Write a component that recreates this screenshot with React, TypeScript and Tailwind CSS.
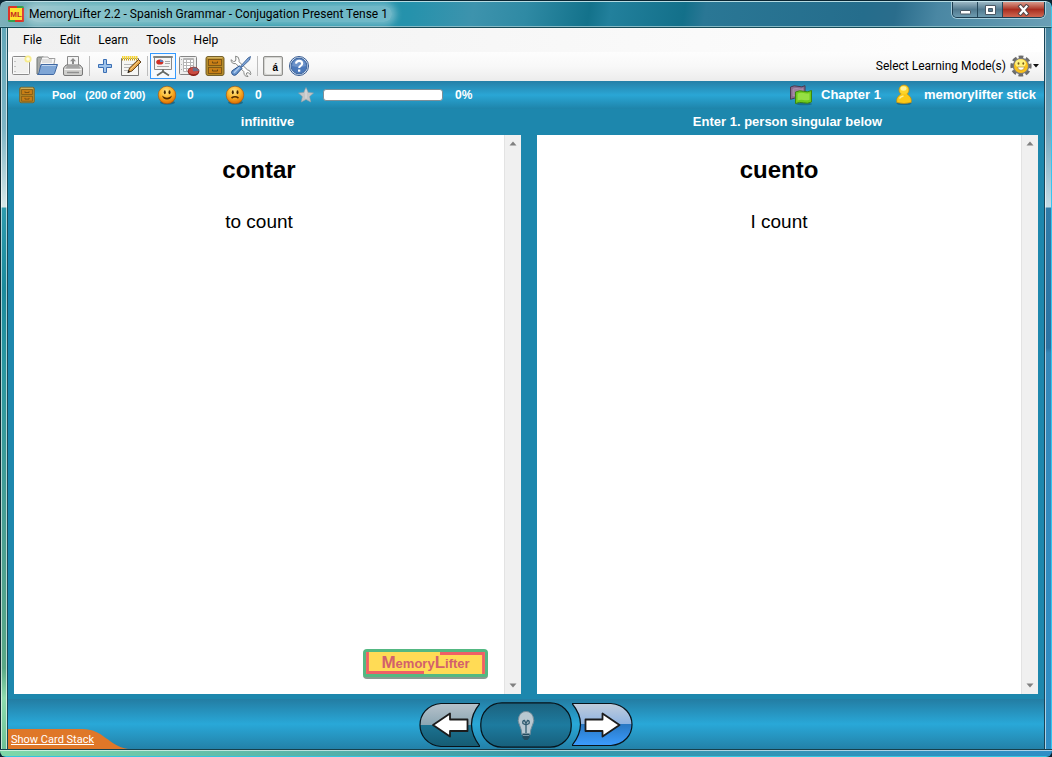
import React from "react";

type IconProps = { className?: string };

const NewIcon = () => (
  <svg width="22" height="22" viewBox="0 0 22 22">
    <rect x="2.500" y="1.500" width="17" height="18" rx="1" fill="#fafafa" stroke="#8b8b8b" />
    <rect x="4" y="3" width="14" height="15" fill="#f0f0ef" />
    <path d="M5 6v1M5 11v1M5 16v1" stroke="#999" />
    <circle cx="18" cy="4" r="3.600" fill="#f7ec8c" />
    <circle cx="18" cy="4" r="1.800" fill="#fffde8" />
  </svg>
);

const OpenIcon = () => (
  <svg width="24" height="22" viewBox="0 0 24 22">
    <path d="M2 19V3.500q0-1.500 1.500-1.500h5l1.500 2h8v13z" fill="#a9acab" stroke="#6f7472" />
    <path d="M5 8l2-6h6l1 1.500h6L18 14H5z" fill="#f7f7f7" stroke="#8d8d8d" strokeWidth=".8" />
    <path d="M7 5h10M7 7h10" stroke="#bbb" strokeWidth=".8" />
    <path d="M6 9.500h16.500L19.500 18.500q-.3 1-1.300 1H2.500q1.200-.3 1.500-2z" fill="#7fa6d6" stroke="#4069a4" />
    <path d="M7 10.500h14" stroke="#bfd5ef" />
  </svg>
);

const PrintIcon = () => (
  <svg width="22" height="22" viewBox="0 0 22 22">
    <path d="M5.500 11V1.500h11V11z" fill="#f4f4f4" stroke="#8b8b8b" />
    <path d="M11 3l3 3.200h-2V9h-2V6.200H8z" fill="#8a8a8a" />
    <path d="M4 10h14l2.500 3v6q0 1.500-1.500 1.500H3q-1.500 0-1.500-1.500v-6z" fill="#cfcfcd" stroke="#777" />
    <path d="M5 11h12l1.500 2.500h-15z" fill="#a5a5a5" />
    <path d="M2.500 14.500h17" stroke="#f5f5f5" />
    <path d="M5 17.500h12" stroke="#8f8f8f" strokeWidth="1.500" />
  </svg>
);

const PlusIcon = () => (
  <svg width="18" height="18" viewBox="0 0 18 18">
    <path d="M7.500 2.500h3v5h5v3h-5v5h-3v-5h-5v-3h5z" fill="#9fc3ea" stroke="#3b6fb4" />
  </svg>
);

const NoteIcon = () => (
  <svg width="22" height="22" viewBox="0 0 22 22">
    <path d="M1.500 3.500h17v17h-17z" fill="#f6f6f4" stroke="#777" />
    <path d="M4 9.500h11M4 12.500h9M4 15.500h8" stroke="#b8b8b8" />
    <path d="M2 3.500h16" stroke="#c99b12" strokeWidth="4" strokeDasharray="1 1" />
    <path d="M2 2.500h16" stroke="#f5d53c" strokeWidth="3" strokeDasharray="1.500 .5" />
    <path d="M8 17.500l1.500-4.500L18.500 4.500l2.500 2.500L12 16z" fill="#e2a145" stroke="#54330f" strokeWidth=".9" />
    <path d="M10.500 14.500L19 6" stroke="#f6cf85" />
    <path d="M7.500 18l1-3 1.700 1.700z" fill="#222" />
  </svg>
);

const BoardIcon = () => (
  <svg width="22" height="22" viewBox="0 0 22 22">
    <path d="M2.500 2.500h17v12h-17z" fill="#f5f5f4" stroke="#888" />
    <rect x="1" y="1" width="20" height="2" rx="1" fill="#80837f" />
    <ellipse cx="7.800" cy="7" rx="3.600" ry="2.600" fill="#cf2f25" />
    <path d="M8 7V4.400q3 .2 3.500 2.600z" fill="#5c83bd" />
    <path d="M13 6.500h5M13 8.500h5M5 11.500h12" stroke="#aaa" />
    <path d="M11 14.500v2M5 20.500l6-4 6 4" stroke="#656965" strokeWidth="1.800" fill="none" />
  </svg>
);

const ReportIcon = () => (
  <svg width="22" height="22" viewBox="0 0 22 22">
    <rect x="1.500" y="1.500" width="17" height="18" rx="1" fill="#eeeeed" stroke="#858585" />
    <path d="M5.500 3.500h10v13h-10z" fill="#fff" stroke="#b5b5b5" />
    <path d="M5.500 4.500h10M5.500 7.500h10M5.500 10.500h10M5.500 13.500h10M8.500 4v12M12.500 4v12" stroke="#b5b5b5" />
    <path d="M3.500 4v14" stroke="#aaa" strokeDasharray="1 4" />
    <ellipse cx="15.500" cy="17" rx="5.500" ry="4" fill="#8b1c16" />
    <ellipse cx="15.500" cy="16" rx="5.500" ry="3.800" fill="#cb4a40" stroke="#842019" strokeWidth=".8" />
    <path d="M15 16.300l-.3-3.800q5.500-.3 6.300 3.500z" fill="#6b6f8c" />
  </svg>
);

const DrawerIcon = ({ className = "size-[22px]" }: IconProps) => (
  <svg className={className} viewBox="0 0 22 22">
    <rect x="2" y="1.500" width="18" height="19" rx="2" fill="#b48a2a" stroke="#75612b" />
    <path d="M3.500 2.800h15" stroke="#dfc478" />
    <rect x="4.500" y="4.500" width="13" height="6" fill="#c97f16" stroke="#7a5413" strokeWidth=".9" />
    <rect x="4.500" y="12.500" width="13" height="6" fill="#c97f16" stroke="#7a5413" strokeWidth=".9" />
    <path d="M8.500 6.500v1.500h5V6.500M8.500 14.500V16h5v-1.500" fill="none" stroke="#6c4a12" />
  </svg>
);

const ToolsIcon = () => (
  <svg width="22" height="22" viewBox="0 0 22 22">
    <path d="M5.500 1.200q3.500 0 3.700 4l-.3 1.400 8.500 8.200q3 .2 3.400 3.700l-.3 1.300-2.200-2.200-1.700.4-.4 1.700 2 1.800q-4 .3-4.300-3.800v-1L5.800 8.600Q1.200 9.200 1 4.700l2.500 2 2-.7.400-2z" fill="#fff" stroke="#858785" />
    <path d="M20.500 1.500L18 3 11 10.800l1 1.200 7.500-7z" fill="#7da5d8" stroke="#31558a" strokeWidth=".8" />
    <path d="M9.500 10.800l2.500 2.500-5.800 6.400q-2 1.400-3.800-.2-1.700-2-.2-3.800z" fill="#6a97cf" stroke="#28508a" />
    <path d="M4 17.800l5.500-5.500" stroke="#b0cdf0" strokeWidth="1.500" />
  </svg>
);

const CharIcon = () => (
  <span className="flex size-5 rounded-xs border border-[#8f8f8c] bg-[#d3d3d0] p-px">
    <span className="flex flex-1 items-end justify-end rounded-xs bg-[#f2f2f0] pr-[3px] font-['Liberation_Sans',sans-serif] text-[10px] leading-3 font-bold">
      á
    </span>
  </span>
);

const HelpIcon = () => (
  <svg width="22" height="22" viewBox="0 0 22 22">
    <circle cx="11" cy="11" r="9.500" fill="#dce8f6" stroke="#35598f" />
    <circle cx="11" cy="11" r="7.900" fill="#4c79ba" stroke="#40679f" />
    <path d="M4 11a7 7 0 0114 0q-7 2-14 0z" fill="#7fa2d1" opacity=".65" />
    <path d="M8 8.600q.3-2.700 3.200-2.700t3 2.600q0 1.400-1.600 2.300-1.400.8-1.400 2.200" fill="none" stroke="#fff" strokeWidth="2.100" />
    <rect x="10" y="14.500" width="2.300" height="2.200" fill="#fff" />
  </svg>
);

const GearFaceIcon = () => (
  <svg width="22" height="22" viewBox="0 0 22 22">
    <circle cx="11" cy="11" r="8.700" fill="none" stroke="#6c6c6c" strokeWidth="3.800" strokeDasharray="4.400 2.433" transform="rotate(-104.500 11 11)" />
    <circle cx="11" cy="11" r="8.300" fill="#7c7c7c" />
    <circle cx="11" cy="11" r="7" fill="#fbc019" />
    <ellipse cx="10.500" cy="8.500" rx="5.400" ry="4.200" fill="#fff27e" />
    <ellipse cx="8.500" cy="8.500" rx=".9" ry="1.300" fill="#7b5b18" />
    <ellipse cx="13.300" cy="8.500" rx=".9" ry="1.300" fill="#7b5b18" />
    <path d="M7.500 12h7q-.5 3.300-3.500 3.300T7.500 12z" fill="#fff" stroke="#b08a2a" strokeWidth=".7" />
  </svg>
);

const FaceIcon = ({ sad }: { sad?: boolean }) => (
  <svg width="20" height="20" viewBox="0 0 20 20">
    <defs>
      <radialGradient id={sad ? "sadFace" : "happyFace"} cx=".45" cy=".3" r=".7">
        <stop offset="0" stopColor="#ffe88e" />
        <stop offset=".5" stopColor="#fcb52a" />
        <stop offset="1" stopColor="#dc6c00" />
      </radialGradient>
    </defs>
    <ellipse cx="10.500" cy="17.500" rx="7.500" ry="2" fill="#174e66" opacity=".6" />
    <circle cx="10" cy="10" r="8.800" fill={sad ? "url(#sadFace)" : "url(#happyFace)"} stroke="#a85308" strokeWidth=".6" />
    <ellipse cx="7.800" cy="7.300" rx="1" ry="2" fill="#422400" />
    <ellipse cx="12.500" cy="7.300" rx="1" ry="2" fill="#422400" />
    {sad ? (
      <path d="M6.500 13q3.500-2.500 7 0" fill="none" stroke="#532a00" strokeWidth="1.600" />
    ) : (
      <path d="M5 10.500l1 .8q4 2.700 8 0l1-.8q-1 4-5 4t-5-4z" fill="#532a00" />
    )}
  </svg>
);

const StarIcon = () => (
  <svg width="16" height="16" viewBox="0 0 16 16">
    <path d="M8 .5l2.300 4.900 5.200.6-3.900 3.600 1.100 5.400L8 12.400 3.300 15l1.100-5.400L.5 6l5.200-.6z" fill="#c4c6c7" stroke="#9aa0a4" strokeWidth=".6" />
    <path d="M8 2.500v9" stroke="#dedede" />
  </svg>
);

const ChapterIcon = () => (
  <svg width="24" height="22" viewBox="0 0 24 22">
    <path d="M1.500 3q3.500-2 7.500-.7t7-.6v12q-3.500 1.800-7 .8t-7.500.8z" fill="#8a6c8e" stroke="#493a50" />
    <path d="M4 5q3-1 5.500-.3t4.500 0v7q-3 .8-5 .2T4 12z" fill="#9c809f" stroke="#b8a0bb" strokeWidth=".6" />
    <ellipse cx="15" cy="20" rx="8" ry="1.300" fill="#165673" opacity=".6" />
    <path d="M6.500 8q4-2 8-.7t8-.8v11.500q-4 2-8 .8t-8 .8z" fill="#6fc91c" stroke="#3b8510" />
    <path d="M8.500 9.500q3.500-1.300 6-.4t6 .1v6.500q-3 1-6 .3t-6 .6z" fill="#96df43" />
  </svg>
);

const UserIcon = () => (
  <svg width="18" height="22" viewBox="0 0 18 22">
    <ellipse cx="9" cy="19.500" rx="7.500" ry="1.600" fill="#165673" opacity=".6" />
    <path d="M1.800 18.500q-.8-5 2.700-7.300L7 9.500h4l2.500 1.700q3.500 2.300 2.700 7.300-7.200 2-14.400 0z" fill="#fcc917" stroke="#c68d07" strokeWidth=".7" />
    <circle cx="9" cy="6" r="5" fill="#fdd42b" stroke="#c68d07" strokeWidth=".7" />
    <path d="M6.500 9.800h5l2 2h-9z" fill="#fcc917" />
    <ellipse cx="8.500" cy="4.500" rx="3" ry="2.200" fill="#fff39a" />
    <path d="M4.500 14.500q1-2 4-2.500" stroke="#fff08d" strokeWidth="1.500" fill="none" />
  </svg>
);

const AppIcon = () => (
  <svg width="16" height="16" viewBox="0 0 16 16" aria-hidden="true">
    <rect width="16" height="16" rx="1.500" fill="#35a04c" />
    <path d="M0 1.500Q0 0 1.500 0H9v2H2v12H0z" fill="#dc3428" />
    <path d="M14 2h2v12.500q0 1.500-1.500 1.500H7v-2h7z" fill="#dc3428" />
    <rect x="2" y="2" width="12" height="12" fill="#ffe12d" />
    <text x="8" y="11" textAnchor="middle" fontSize="8" fontWeight="700" fontFamily="Liberation Sans, sans-serif" fill="#c62c20">ML</text>
  </svg>
);

const menus = ["File", "Edit", "Learn", "Tools", "Help"];

const toolGroups: { label: string; icon: React.ReactNode; active?: boolean }[][] = [
  [
    { label: "New", icon: <NewIcon /> },
    { label: "Open", icon: <OpenIcon /> },
    { label: "Print", icon: <PrintIcon /> },
  ],
  [
    { label: "Add card", icon: <PlusIcon /> },
    { label: "Edit card", icon: <NoteIcon /> },
  ],
  [
    { label: "Slideshow", icon: <BoardIcon />, active: true },
    { label: "Statistics", icon: <ReportIcon /> },
    { label: "Card boxes", icon: <DrawerIcon /> },
    { label: "Settings", icon: <ToolsIcon /> },
  ],
  [
    { label: "Character map", icon: <CharIcon /> },
    { label: "Help contents", icon: <HelpIcon /> },
  ],
];

function TitleBar() {
  return (
    <header className="flex h-[27px] items-start rounded-t-[6px] border-t border-r border-b border-t-[#b5dbe2] border-r-[#3cc8ea] border-b-[#164b58] bg-[linear-gradient(100deg,#7fb0ba_0%,#4aa3af_8%,#1f93a5_25%,#2592ac_39%,#3d93ad_45%,#2f8aa4_50%,#13728b_56%,#22809c_58%,#13708a_65%,#2a7795_67%,#256d8c_82%,#2a6d8c_85%,#4a87a3_89%,#6a9fb5_100%)] pr-[6px] pl-2 shadow-[inset_0_-1px_0_#86b9c4]">
      <div className="flex h-[25px] items-center gap-[5px] pb-px">
        <AppIcon />
        <h1 className="rounded-full bg-white/35 pr-1 text-[12px] leading-4 text-black shadow-[0_0_7px_4px_rgba(255,255,255,0.35)]">
          MemoryLifter 2.2 - Spanish Grammar - Conjugation Present Tense 1
        </h1>
      </div>
      <div className="ml-auto flex h-4 overflow-hidden rounded-b-[5px] border border-t-0 border-[#1c3d50] shadow-[0_0_0_1px_rgba(200,230,240,0.7)]">
        <button aria-label="Minimize" className="flex w-[25px] items-center justify-center border-r border-[#24475a] bg-linear-to-b from-[#9ab6c3] via-[#527a8f] via-50% to-[#6d9bb0]">
          <svg width="13" height="12" viewBox="0 0 13 12">
            <rect x="1.500" y="6.500" width="10" height="3.500" rx=".5" fill="#fff" stroke="#4c5a66" />
          </svg>
        </button>
        <button aria-label="Maximize" className="flex w-[25px] items-center justify-center border-r border-[#24475a] bg-linear-to-b from-[#9ab6c3] via-[#527a8f] via-50% to-[#6d9bb0]">
          <svg width="13" height="12" viewBox="0 0 13 12">
            <path d="M1.500 1.500h10v9h-10zM4.500 4.500v3h4v-3z" fill="#fff" fillRule="evenodd" stroke="#4c5a66" />
          </svg>
        </button>
        <button aria-label="Close" className="flex w-[41px] items-center justify-center bg-linear-to-b from-[#d99a8c] via-[#a92d20] via-50% to-[#cf6650]">
          <svg width="13" height="12" viewBox="0 0 13 12">
            <path d="M3.500 2.500l6 7M9.500 2.500l-6 7" stroke="#53494c" strokeWidth="4.200" strokeLinecap="square" />
            <path d="M3.500 2.500l6 7M9.500 2.500l-6 7" stroke="#fff" strokeWidth="2.200" strokeLinecap="square" />
          </svg>
        </button>
      </div>
    </header>
  );
}

function Toolbar() {
  return (
    <div role="toolbar" className="flex h-[29px] items-center bg-linear-to-b from-[#fdfdfd] via-[#f8f8f8] to-[#ececec] pb-[2px]">
      {toolGroups.map((group, i) => (
        <div key={i} className="flex items-center">
          {i > 0 && <span className="mr-[2px] ml-[3px] h-5 w-px bg-[#bdbdbd]" />}
          {group.map((tool) => (
            <button
              key={tool.label}
              aria-label={tool.label}
              className={
                tool.active
                  ? "flex size-[26px] items-center justify-center border border-[#3399ff] bg-[#f5f9fd]"
                  : "flex size-[26px] items-center justify-center"
              }
            >
              {tool.icon}
            </button>
          ))}
        </div>
      ))}
      <button className="ml-auto flex items-center gap-1 pr-1 text-[12px] leading-4">
        Select Learning Mode(s)
        <span className="flex items-center gap-px">
          <GearFaceIcon />
          <svg width="7" height="4" viewBox="0 0 7 4">
            <path d="M0 0h6L3 3.500z" fill="#111" />
          </svg>
        </span>
      </button>
    </div>
  );
}

function StatusBar() {
  return (
    <div className="flex h-7 items-center bg-linear-to-b from-[#257fa7] via-[#2aa6d5] to-[#1e84aa] px-2 text-[12px] leading-4 font-bold text-white">
      <div className="flex items-center">
        <span className="ml-[2px] flex w-[34px]">
          <DrawerIcon className="size-[18px]" />
        </span>
        <span className="w-[33px] text-[11px]">Pool</span>
        <span className="w-[72px] text-[11px]">(200 of 200)</span>
        <span className="flex w-[68px] items-center gap-[10px]">
          <FaceIcon />0
        </span>
        <span className="flex w-[73px] items-center gap-[10px]">
          <FaceIcon sad />0
        </span>
        <StarIcon />
        <div
          role="progressbar"
          aria-valuenow={0}
          aria-label="Score"
          className="mr-3 ml-[9px] h-3 w-[120px] rounded-[3px] border border-[#7d8f98] bg-white"
        />
        <span>0%</span>
      </div>
      <div className="ml-auto flex items-center text-[13px]">
        <ChapterIcon />
        <span className="mr-[14px] ml-[8px]">Chapter 1</span>
        <UserIcon />
        <span className="ml-[11px]">memorylifter stick</span>
      </div>
    </div>
  );
}

function Scrollbar() {
  return (
    <div aria-hidden="true" className="flex w-[17px] flex-col items-center justify-between border-l border-[#e3e3e3] bg-[#f0f0f0] py-[6px]">
      <svg width="8" height="5" viewBox="0 0 8 5">
        <path d="M4 .5l3.500 4h-7z" fill="#808080" />
      </svg>
      <svg width="8" height="5" viewBox="0 0 8 5">
        <path d="M4 4.500l-3.500-4h7z" fill="#808080" />
      </svg>
    </div>
  );
}

function LogoBadge() {
  return (
    <div className="mr-4 mb-[15px] flex h-[30px] w-[125px] rounded-[4px] border-b-2 border-[#8a9a90] bg-[#53b882] p-[3px]">
      <div className="relative flex flex-1 items-center justify-center bg-[#ffdb55]">
        <svg className="absolute inset-0 size-full" viewBox="0 0 119 22" preserveAspectRatio="none" aria-hidden="true">
          <path d="M1.500 0v20.500H58M74 1.500h43.500V22" fill="none" stroke="#ef5f66" strokeWidth="2.800" />
        </svg>
        <span className="relative text-[13px] leading-5 font-bold text-[#d3606c]">
          <span className="text-[17px]">M</span>emory<span className="text-[17px]">L</span>ifter
        </span>
      </div>
    </div>
  );
}

function CardPanel({ title, word, translation, children }: { title: string; word: string; translation: string; children?: React.ReactNode }) {
  return (
    <section className="flex min-w-0 flex-col">
      <h2 className="h-[26px] text-center text-[13px] leading-[26px] font-bold text-white">{title}</h2>
      <div className="flex flex-1 bg-white">
        <div className="flex flex-1 flex-col items-center pt-5 text-black">
          <p className="text-[24px] leading-[30px] font-bold">{word}</p>
          <p className="mt-[25px] text-[19px] leading-6">{translation}</p>
          {children && <div className="mt-auto self-end">{children}</div>}
        </div>
        <Scrollbar />
      </div>
    </section>
  );
}

function Footer() {
  return (
    <footer className="grid h-[50px] grid-cols-[1fr_auto_1fr] bg-linear-to-b from-[#237da3] via-[#29a8d8] to-[#2381a8]">
      <a href="#stack" className="relative flex h-5 w-[120px] items-center self-end pt-px pl-[3px] text-[11px] leading-4 text-white underline">
        <svg className="absolute inset-0" width="120" height="20" viewBox="0 0 120 20" aria-hidden="true">
          <path d="M0 0H74C96 0 100 17 120 20H0z" fill="#df7728" />
        </svg>
        <span className="relative">Show Card Stack</span>
      </a>
      <div className="flex items-end pb-px">
        <button aria-label="Previous card">
          <svg width="61" height="46" viewBox="0 0 61 46">
            <defs>
              <linearGradient id="prevFill" x2="0" y2="1">
                <stop offset="0" stopColor="#b7c2cb" />
                <stop offset=".5" stopColor="#8ba6b3" />
                <stop offset=".5" stopColor="#1c7392" />
                <stop offset="1" stopColor="#155b73" />
              </linearGradient>
            </defs>
            <path d="M22 1.500H61Q44 22 61 44.500H22C-6 42-6 4 22 1.500z" fill="url(#prevFill)" stroke="#08131a" strokeWidth="1.200" />
            <path d="M14 23L31 11.500v6H48.500V29H31v5.500z" fill="#fff" stroke="#1c1c1c" strokeWidth="1.800" strokeLinejoin="round" />
          </svg>
        </button>
        <button aria-label="Show answer">
          <svg width="92" height="46" viewBox="0 0 92 46">
            <defs>
              <linearGradient id="midFill" x2="0" y2="1">
                <stop offset="0" stopColor="#1c627e" />
                <stop offset=".5" stopColor="#1d7b9f" />
                <stop offset="1" stopColor="#175f7b" />
              </linearGradient>
            </defs>
            <rect x=".8" y=".8" width="90.400" height="44.400" rx="21" fill="url(#midFill)" stroke="#06131a" strokeWidth="1.200" />
            <path d="M42 33q-.5-6-2.500-10-2.500-4-.5-8.500 2-5 7-5t7 5q2 4.500-.5 8.500-2 4-2.500 10z" fill="#b9c8d1" stroke="#718b99" />
            <path d="M46 31v-8l-3-1.500q-1-3 1.500-3l1.500 3 1.500-3q2.500 0 1.500 3L46 23" fill="none" stroke="#315c70" strokeWidth="1.300" />
            <path d="M42.500 31.500h7v4l-2 2.500h-3l-2-2.500z" fill="#234c60" />
            <path d="M43 33.500h6" stroke="#7b98a8" />
          </svg>
        </button>
        <button aria-label="Next card">
          <svg width="61" height="46" viewBox="0 0 61 46">
            <defs>
              <linearGradient id="nextFill" x2="0" y2="1">
                <stop offset="0" stopColor="#c2cddb" />
                <stop offset=".5" stopColor="#8db3e2" />
                <stop offset=".5" stopColor="#2878c3" />
                <stop offset="1" stopColor="#3c9cff" />
              </linearGradient>
            </defs>
            <path d="M0 1.500H39C67 4 67 41 39 43.500H0Q17 22 0 1.500z" fill="url(#nextFill)" stroke="#08131a" strokeWidth="1.200" />
            <path d="M47.500 23L30.500 11.500v6H13.500V29H30.500v5.500z" fill="#fff" stroke="#1c1c1c" strokeWidth="1.800" strokeLinejoin="round" />
          </svg>
        </button>
      </div>
    </footer>
  );
}

export default function App() {
  return (
    <div className="flex min-h-screen flex-col bg-[#0a2532] font-['Roboto','Noto_Sans',sans-serif]">
      <div className="mt-px flex flex-1 flex-col overflow-hidden rounded-[6px]">
        <TitleBar />
        <div className="flex flex-1">
          <div className="w-2 border-r border-l border-r-[#164b58] border-l-[#0c2730] bg-[linear-gradient(to_bottom,#62a7b8_0px,#7eb5c5_100px,#d6e7e8_179px,#2f9bad_180px,#1b8a9c_260px,#2b97a0_340px,#4a9f93_500px,#5aa886_640px,#8edcae_670px,#6cc095_722px)] shadow-[inset_1px_0_0_rgba(255,255,255,0.6),inset_-1px_0_0_rgba(255,255,255,0.6)]" />
          <main className="flex min-w-0 flex-1 flex-col bg-[#1d87ad]">
            <nav className="flex h-6 items-center bg-linear-to-r from-[#f0f0f0] to-white pl-[6px] text-[12px] leading-4">
              {menus.map((m) => (
                <button key={m} className="px-[9px]">
                  {m}
                </button>
              ))}
            </nav>
            <Toolbar />
            <div className="flex flex-1 flex-col">
              <div className="flex flex-1 flex-col font-['Liberation_Sans',sans-serif]">
                <StatusBar />
                <div className="grid flex-1 grid-cols-[507fr_501fr] gap-x-4 px-[6px] pb-[5px]">
                  <CardPanel title="infinitive" word="contar" translation="to count">
                    <LogoBadge />
                  </CardPanel>
                  <CardPanel title="Enter 1. person singular below" word="cuento" translation="I count" />
                </div>
              </div>
              <Footer />
            </div>
          </main>
          <div className="w-2 border-r border-l border-r-[#35c6f0] border-l-[#174458] bg-[linear-gradient(to_bottom,#4686a2_0px,#6fa5bc_100px,#c5dce6_179px,#2f7ba8_180px,#2a72a2_320px,#3587b8_325px,#2e8ec6_722px)] shadow-[inset_1px_0_0_rgba(255,255,255,0.6)]" />
        </div>
        <div className="h-2 border-t border-b border-t-[#163f4c] border-b-[#33c4e0] bg-linear-to-r from-[#7fd8a8] via-[#3a9aa8] to-[#2e8ec6] shadow-[inset_0_1px_0_rgba(255,255,255,0.6)]" />
      </div>
    </div>
  );
}
